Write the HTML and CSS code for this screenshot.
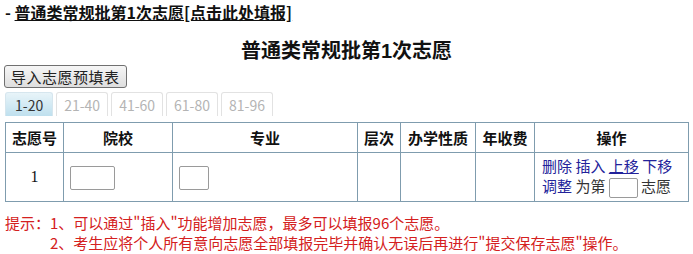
FILE: index.html
```html
<!DOCTYPE html>
<html lang="zh-CN">
<head>
	<meta charset="UTF-8" />
	<title>普通类常规批第1次志愿</title>
	<link rel="stylesheet" href="styles.css">
</head>
<body>
	<div class="top">- <a href="#" class="top-link">普通类常规批第1次志愿[点击此处填报]</a></div>
	<h2 class="title">普通类常规批第<span class="num">1</span>次志愿</h2>
	<button class="btn">导入志愿预填表</button>
	<div class="tabs">
		<div class="tab active">1-20</div>
		<div class="tab">21-40</div>
		<div class="tab">41-60</div>
		<div class="tab">61-80</div>
		<div class="tab">81-96</div>
	</div>
	<table class="grid">
		<colgroup>
			<col style="width:58px">
			<col style="width:109px">
			<col style="width:185px">
			<col style="width:43px">
			<col style="width:75px">
			<col style="width:59px">
			<col style="width:154px">
		</colgroup>
		<tr class="head">
			<th>志愿号</th>
			<th>院校</th>
			<th>专业</th>
			<th>层次</th>
			<th>办学性质</th>
			<th>年收费</th>
			<th>操作</th>
		</tr>
		<tr class="row">
			<td class="no">1</td>
			<td><input type="text" class="ipt ipt-school"></td>
			<td><input type="text" class="ipt ipt-major"></td>
			<td></td>
			<td></td>
			<td></td>
			<td class="ops">
				<div><a href="#">删除</a> <a href="#">插入</a> <a href="#" class="hover">上移</a> <a href="#">下移</a></div>
				<div><a href="#">调整</a> 为第 <input type="text" class="ipt ipt-pos"> 志愿</div>
			</td>
		</tr>
	</table>
	<div class="hint">
		<div class="hint-label">提示：</div>
		<div class="hint-list">
			<div>1、可以通过"插入"功能增加志愿，最多可以填报96个志愿。</div>
			<div>2、考生应将个人所有意向志愿全部填报完毕并确认无误后再进行"提交保存志愿"操作。</div>
		</div>
	</div>
</body>
</html>
```

FILE: styles.css
```css
body{
	margin:0;
	padding:3px 5px 0;
	font-family:"Noto Sans CJK SC",sans-serif;
	color:#222;
	background:#fff;
}
.top{
	font-size:16px;
	font-weight:bold;
	line-height:18px;
	color:#111;
}
.top-link{
	color:#111;
	text-decoration:underline;
}
.title{
	margin:17px 0 0;
	font-size:20px;
	line-height:24px;
	font-weight:bold;
	text-align:center;
	color:#111;
}
.title .num{
	font-family:"Liberation Sans",sans-serif;
	font-weight:900;
}
.btn{
	display:block;
	margin:2px 0 0 -1px;
	height:23px;
	padding:0 6px;
	font-family:"Noto Sans CJK SC",sans-serif;
	font-size:15px;
	line-height:21px;
	letter-spacing:0.5px;
	color:#222;
	background:linear-gradient(#f6f6f6,#dedede);
	border:1px solid #707070;
	border-radius:3px;
}
.tabs{
	display:flex;
	gap:3px;
	margin-top:4px;
}
.tab{
	height:23px;
	padding:0 7px;
	font-size:14px;
	line-height:24px;
	color:#b4b4b4;
	border:1px solid #e2e2e2;
	border-bottom:none;
	border-radius:3px 3px 0 0;
	background:#fff;
}
.tab.active{
	padding:0 9px;
	color:#333;
	background:linear-gradient(#e8f4f9,#bfe0ee);
	border-color:#d6e6ee;
}
.grid{
	margin-top:6px;
	width:684px;
	table-layout:fixed;
	border-collapse:collapse;
}
.grid th,.grid td{
	border:1px solid #7f9cae;
	padding:0;
}
.grid th{
	height:29px;
	font-size:15px;
	font-weight:bold;
	color:#111;
	text-align:center;
}
.row td{
	height:48px;
}
.no{
	text-align:center;
	font-family:"Liberation Serif",serif;
	font-size:16px;
	color:#111;
}
.ipt{
	box-sizing:border-box;
	border:1px solid #9a9a9a;
	border-radius:2px;
	padding:0;
	background:#fff;
	vertical-align:middle;
}
.ipt-school{
	width:45px;
	height:24px;
	margin-left:6px;
}
.ipt-major{
	width:30px;
	height:24px;
	margin-left:6px;
}
.ipt-pos{
	width:29px;
	height:20px;
}
.ops{
	padding-left:7px !important;
	font-size:15px;
	line-height:20px;
	color:#333;
}
.ops a{
	color:#22229a;
	text-decoration:none;
}
.ops a.hover{
	text-decoration:underline;
}
.hint{
	display:flex;
	margin-top:11px;
	font-size:15px;
	line-height:20px;
	color:#d42020;
}
```
